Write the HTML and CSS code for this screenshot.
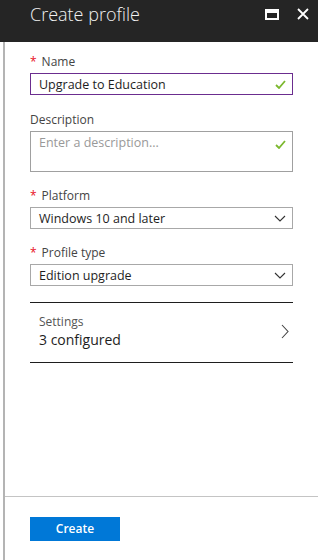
FILE: index.html
```html
<!DOCTYPE html>
<html lang="en">
<head>
    <meta charset="UTF-8">
    <title>Create profile</title>
    <link rel="stylesheet" href="styles.css">
</head>
<body>

<div class="blade">
    <!-- Header -->
    <div class="blade-header">
        <h1>Create profile</h1>
        <div class="header-actions">
            <svg class="icon-max" width="14" height="11" viewBox="0 0 14 11">
                <rect x="1" y="1" width="12" height="9" fill="none" stroke="#fff" stroke-width="2"/>
                <rect x="1" y="1" width="12" height="3" fill="#fff"/>
            </svg>
            <svg class="icon-close" width="12" height="12" viewBox="0 0 12 12">
                <path d="M1 1 L11 11 M11 1 L1 11" stroke="#fff" stroke-width="1.8"/>
            </svg>
        </div>
    </div>

    <div class="blade-body">
        <div class="content">
            <div class="field field-name">
                <label class="label"><span class="req">*</span>Name</label>
                <div class="input active">
                    <span>Upgrade to Education</span>
                    <svg class="check" width="11" height="9" viewBox="0 0 11 9"><path d="M1 5 L4 8 L10 1" fill="none" stroke="#7cb82f" stroke-width="1.8"/></svg>
                </div>
            </div>

            <div class="field">
                <label class="label">Description</label>
                <div class="input textarea">
                    <span class="placeholder">Enter a description...</span>
                    <svg class="check" width="11" height="9" viewBox="0 0 11 9"><path d="M1 5 L4 8 L10 1" fill="none" stroke="#7cb82f" stroke-width="1.8"/></svg>
                </div>
            </div>

            <div class="field">
                <label class="label"><span class="req">*</span>Platform</label>
                <div class="input select">
                    <span>Windows 10 and later</span>
                    <svg class="chevron" width="12" height="7" viewBox="0 0 12 7"><path d="M1 1 L6 6 L11 1" fill="none" stroke="#333" stroke-width="1.1"/></svg>
                </div>
            </div>

            <div class="field">
                <label class="label"><span class="req">*</span>Profile type</label>
                <div class="input select">
                    <span>Edition upgrade</span>
                    <svg class="chevron" width="12" height="7" viewBox="0 0 12 7"><path d="M1 1 L6 6 L11 1" fill="none" stroke="#333" stroke-width="1.1"/></svg>
                </div>
            </div>

            <div class="settings-row">
                <div>
                    <div class="settings-title">Settings</div>
                    <div class="settings-value">3 configured</div>
                </div>
                <svg class="arrow" width="8" height="15" viewBox="0 0 8 15"><path d="M1 1 L7 7.5 L1 14" fill="none" stroke="#444" stroke-width="1.1"/></svg>
            </div>
        </div>

        <div class="blade-footer">
            <button class="button">Create</button>
        </div>
    </div>
</div>

</body>
</html>
```

FILE: styles.css
```css
body {
    margin: 0;
    padding: 0;
    font-family: 'Segoe UI', 'Open Sans', sans-serif;
    background-color: #fff;
    color: #1e1e1e;
}

.blade {
    width: 318px;
    height: 560px;
    display: flex;
    flex-direction: column;
}

.blade-header {
    background-color: #252525;
    height: 42px;
    display: flex;
    align-items: center;
    justify-content: space-between;
    padding: 0 9px 0 30px;
    flex-shrink: 0;
}

h1 {
    margin: 0;
    font-size: 18px;
    font-weight: 300;
    color: #f2f2f2;
    position: relative;
    top: -7px;
}

.header-actions {
    display: flex;
    align-items: center;
    gap: 18px;
    position: relative;
    top: -7px;
}

.blade-body {
    flex: 1;
    margin-left: 3px;
    border-left: 2px solid #b4b4b4;
    display: flex;
    flex-direction: column;
}

.content {
    flex: 1;
    padding: 12px 25px 0 25px;
}

.field {
    margin-bottom: 16px;
}

.field-name {
    margin-bottom: 17px;
}

.label {
    display: block;
    font-size: 12px;
    color: #444;
    line-height: 16px;
    margin-bottom: 3px;
}

.req {
    color: #e81123;
    margin-right: 5px;
}

.input {
    border: 1px solid #a0a0a0;
    display: flex;
    align-items: center;
    justify-content: space-between;
    padding: 0 6px 0 8px;
    font-size: 12.5px;
    color: #1e1e1e;
    box-sizing: border-box;
    height: 22px;
}

.input.active {
    border-color: #6b2d8f;
}

.textarea {
    height: 41px;
    align-items: flex-start;
    padding-top: 2px;
}

.textarea .check {
    margin-top: 6px;
}

.placeholder {
    color: #999;
}

.select {
    border-color: #a8a8a8;
}

.settings-row {
    margin-top: 16px;
    border-top: 1px solid #1e1e1e;
    border-bottom: 1px solid #1e1e1e;
    height: 61px;
    box-sizing: border-box;
    display: flex;
    align-items: center;
    justify-content: space-between;
    padding: 0 4px 3px 9px;
}

.settings-title {
    font-size: 12px;
    color: #555;
}

.settings-value {
    font-size: 14px;
    color: #1e1e1e;
    margin-top: 0;
}

.blade-footer {
    border-top: 1px solid #c4c4c4;
    height: 64px;
    padding: 19px 25px 0 25px;
    box-sizing: border-box;
}

.button {
    background-color: #0078d7;
    color: white;
    font-family: inherit;
    font-weight: 600;
    font-size: 12px;
    width: 90px;
    height: 24px;
    border: none;
    cursor: pointer;
}
```
